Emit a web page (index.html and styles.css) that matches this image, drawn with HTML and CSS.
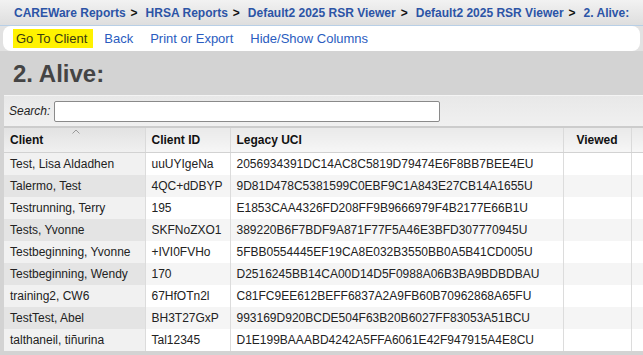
FILE: index.html
```html
<!DOCTYPE html>
<html>
<head>
<meta charset="utf-8">
<link rel="stylesheet" href="styles.css">
</head>
<body>
<div class="crumbs">
  <a class="crumb">CAREWare Reports</a><span class="sep">&gt;</span>
  <a class="crumb">HRSA Reports</a><span class="sep">&gt;</span>
  <a class="crumb">Default2 2025 RSR Viewer</a><span class="sep">&gt;</span>
  <a class="crumb">Default2 2025 RSR Viewer</a><span class="sep">&gt;</span>
  <a class="crumb">2. Alive:</a>
</div>
<div class="navwrap">
  <div class="nav">
    <a class="navlink hl">Go To Client</a>
    <a class="navlink">Back</a>
    <a class="navlink">Print or Export</a>
    <a class="navlink">Hide/Show Columns</a>
  </div>
</div>
<h1 class="title">2. Alive:</h1>
<div class="panel">
  <div class="search"><label class="slabel">Search:</label><input class="sinput" type="text"></div>
  <div class="tablewrap">
  <table class="grid">
    <colgroup><col class="c1"><col class="c2"><col class="c3"><col class="c4"><col class="c5"></colgroup>
    <thead>
      <tr><th class="sorted">Client<svg class="arrow" width="8" height="5" viewBox="0 0 8 5"><path d="M0.5 4.5 L4 1 L7.5 4.5" fill="none" stroke="#999" stroke-width="1"/></svg></th><th>Client ID</th><th>Legacy UCI</th><th class="center">Viewed</th><th></th></tr>
    </thead>
    <tbody>
      <tr><td>Test, Lisa Aldadhen</td><td>uuUYIgeNa</td><td>2056934391DC14AC8C5819D79474E6F8BB7BEE4EU</td><td></td><td></td></tr>
      <tr><td>Talermo, Test</td><td>4QC+dDBYP</td><td>9D81D478C5381599C0EBF9C1A843E27CB14A1655U</td><td></td><td></td></tr>
      <tr><td>Testrunning, Terry</td><td>195</td><td>E1853CAA4326FD208FF9B9666979F4B2177E66B1U</td><td></td><td></td></tr>
      <tr><td>Tests, Yvonne</td><td>SKFNoZXO1</td><td>389220B6F7BDF9A871F77F5A46E3BFD307770945U</td><td></td><td></td></tr>
      <tr><td>Testbeginning, Yvonne</td><td>+IVI0FVHo</td><td>5FBB0554445EF19CA8E032B3550BB0A5B41CD005U</td><td></td><td></td></tr>
      <tr><td>Testbeginning, Wendy</td><td>170</td><td>D2516245BB14CA00D14D5F0988A06B3BA9BDBDBAU</td><td></td><td></td></tr>
      <tr><td>training2, CW6</td><td>67HfOTn2l</td><td>C81FC9EE612BEFF6837A2A9FB60B70962868A65FU</td><td></td><td></td></tr>
      <tr><td>TestTest, Abel</td><td>BH3T27GxP</td><td>993169D920BCDE504F63B20B6027FF83053A51BCU</td><td></td><td></td></tr>
      <tr><td>talthaneil, tiñurina</td><td>Tal12345</td><td>D1E199BAAABD4242A5FFA6061E42F947915A4E8CU</td><td></td><td></td></tr>
    </tbody>
  </table>
  </div>
</div>
</body>
</html>
```

FILE: styles.css
```css
html, body {
  margin: 0;
  padding: 0;
  overflow: hidden;
}
body {
  background: #d3d3d3;
  font-family: "Liberation Sans", Arial, sans-serif;
  color: #222;
}
.crumbs {
  height: 26px;
  box-sizing: border-box;
  padding-left: 14px;
  display: flex;
  align-items: center;
  background: linear-gradient(#f2f2f2, #dedede);
  border-bottom: 1px solid #b8cfe6;
  font-size: 12px;
  font-weight: bold;
  white-space: nowrap;
  overflow: hidden;
}
.crumb {
  color: #2c54a6;
}
.sep {
  color: #111;
  margin: 0 8px 0 5px;
}
.navwrap {
  background: #e2e2e2;
  padding: 0 3px 0 3px;
}
.nav {
  height: 25px;
  background: #fff;
  border-radius: 8px;
  display: flex;
  align-items: center;
  padding-left: 10px;
  gap: 17px;
  font-size: 13px;
}
.navlink {
  color: #2a5cc0;
}
.hl {
  background: #fff200;
  color: #3a3a10;
  padding: 2px 6px 2px 3px;
  margin-right: -6px;
}
.title {
  margin: 0;
  height: 44px;
  box-sizing: border-box;
  padding: 9px 0 0 13px;
  font-size: 24px;
  font-weight: bold;
  color: #444;
  line-height: 28px;
}
.panel {
  margin-left: 4px;
  border-top: 1px solid #f4f4f4;
  background: #fff;
  overflow: hidden;
}
.search {
  height: 30px;
  display: flex;
  align-items: center;
  background: linear-gradient(#e8e8e8, #f0f0f0);
  font-size: 12px;
  padding-left: 5px;
}
.slabel {
  font-style: italic;
  color: #222;
  margin-right: 4px;
}
.sinput {
  width: 386px;
  height: 21px;
  box-sizing: border-box;
  border: 1px solid #8a8a8a;
  border-radius: 2px;
  margin: 0;
  padding: 0;
}
.tablewrap {
  border-top: 2px solid #cccccc;
}
.grid {
  border-collapse: collapse;
  table-layout: fixed;
  width: 639px;
  font-size: 12px;
}
.c1 { width: 141px; }
.c2 { width: 85px; }
.c3 { width: 333px; }
.c4 { width: 68px; }
.c5 { width: 12px; }
.grid th {
  height: 24px;
  padding: 0 6px;
  text-align: left;
  font-weight: bold;
  color: #111;
  background: linear-gradient(#e9e9e9, #f6f6f6);
  border-right: 1px solid #dadada;
  border-bottom: 1px solid #d2d2d2;
  position: relative;
  white-space: nowrap;
}
.grid th.sorted {
  background: linear-gradient(#e2e2e2, #f0f0f0);
}
.grid th.center {
  text-align: center;
}
.arrow {
  position: absolute;
  left: 68px;
  top: 1px;
}
.grid td {
  height: 22px;
  padding: 0 6px;
  white-space: nowrap;
  overflow: hidden;
  color: #222;
  border-right: 1px solid #dcdcdc;
  background: #fff;
}
.grid th:last-child, .grid td:last-child {
  padding: 0;
  border-right: none;
}
.grid tbody tr:nth-child(even) td {
  background: #f5f5f5;
}
.grid tbody td:first-child {
  background: #f1f1f1;
}
.grid tbody tr:nth-child(even) td:first-child {
  background: #e4e4e4;
}
```
